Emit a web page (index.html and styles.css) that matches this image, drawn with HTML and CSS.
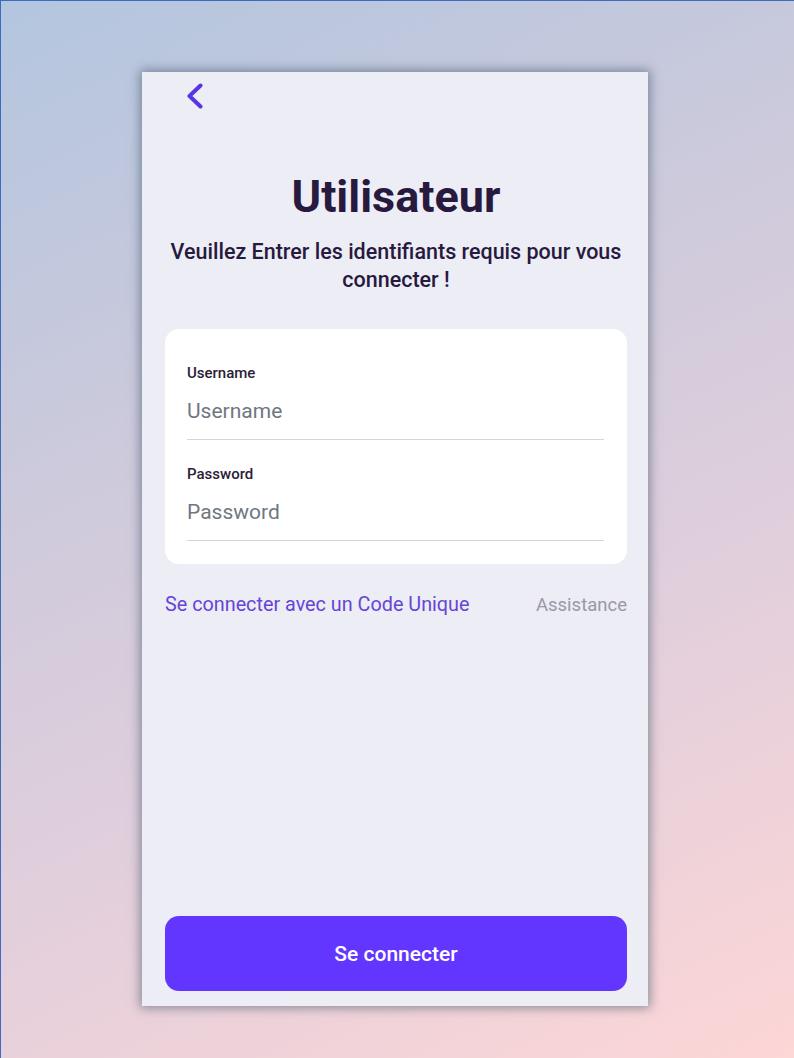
FILE: index.html
```html
<!DOCTYPE html>
<html lang="fr">
<head>
<meta charset="utf-8">
<title>Utilisateur</title>
<link rel="stylesheet" href="styles.css">
</head>
<body>
<div class="stage">
  <div class="phone">
    <button class="back" aria-label="Retour">
      <svg width="26" height="26" viewBox="0 0 26 26"><path d="M17.5 2.5 L6.5 13 L17.5 23.5" fill="none" stroke="#5a33e6" stroke-width="4" stroke-linecap="round" stroke-linejoin="round"/></svg>
    </button>
    <h1 class="title">Utilisateur</h1>
    <p class="subtitle">Veuillez Entrer les identifiants requis pour vous connecter !</p>
    <form class="card">
      <div class="field">
        <label class="label">Username</label>
        <input class="input" type="text" placeholder="Username">
      </div>
      <div class="field">
        <label class="label">Password</label>
        <input class="input" type="password" placeholder="Password">
      </div>
    </form>
    <div class="links">
      <a class="link-code">Se connecter avec un Code Unique</a>
      <a class="link-help">Assistance</a>
    </div>
    <div class="spacer"></div>
    <button class="submit">Se connecter</button>
  </div>
</div>
</body>
</html>
```
FILE: styles.css
```css
* { box-sizing: border-box; }
html, body { margin: 0; padding: 0; }
body { font-family: Roboto, "Noto Sans", sans-serif; }
.stage {
  width: 794px;
  height: 1058px;
  border-top: 1px solid #3a6cc0;
  border-left: 1px solid #3a6cc0;
  background: linear-gradient(155deg, #b3c6df 0%, #c9c9dc 30%, #e2cfdc 65%, #fdd6d6 100%);
  padding-top: 71px;
  padding-left: 141px;
  overflow: hidden;
}
.phone {
  width: 506px;
  height: 934px;
  background: #ecedf5;
  box-shadow: 0 0 10px 2px rgba(60, 80, 100, 0.55);
  display: flex;
  flex-direction: column;
  padding: 0 21px 15px 23px;
}
.back {
  align-self: flex-start;
  margin: 11px 0 0 18px;
  padding: 0;
  border: 0;
  background: none;
  width: 26px;
  height: 26px;
  display: flex;
}
.title {
  margin: 60px 0 0;
  text-align: center;
  font-size: 45px;
  line-height: 56px;
  font-weight: 700;
  color: #28193f;
}
.subtitle {
  margin: 13px -6px 0;
  text-align: center;
  font-size: 21.5px;
  line-height: 28px;
  font-weight: 500;
  color: #28193f;
}
.card {
  margin: 35px 0 0;
  background: #fff;
  border-radius: 14px;
  padding: 34px 23px 23px 22px;
  display: flex;
  flex-direction: column;
  gap: 24px;
}
.field { display: flex; flex-direction: column; }
.label {
  font-size: 15px;
  line-height: 20px;
  font-weight: 500;
  color: #2a2035;
}
.input {
  margin-top: 14px;
  border: 0;
  border-bottom: 1px solid #d6d6da;
  padding: 0 0 14px;
  font-family: Roboto, "Noto Sans", sans-serif;
  font-size: 21px;
  line-height: 28px;
  height: 43px;
  outline: none;
  background: transparent;
  color: #22182f;
}
.input::placeholder { color: #6f7780; }
.links {
  margin-top: 29px;
  display: flex;
  justify-content: space-between;
  align-items: baseline;
}
.link-code {
  font-size: 19.8px;
  line-height: 24px;
  color: #6744d6;
}
.link-help {
  font-size: 18.5px;
  line-height: 24px;
  color: #9b97a6;
}
.spacer { flex: 1; }
.submit {
  height: 75px;
  border: 0;
  border-radius: 14px;
  background: #6236ff;
  color: #fff;
  font-family: Roboto, "Noto Sans", sans-serif;
  font-size: 21px;
  font-weight: 500;
}
```
